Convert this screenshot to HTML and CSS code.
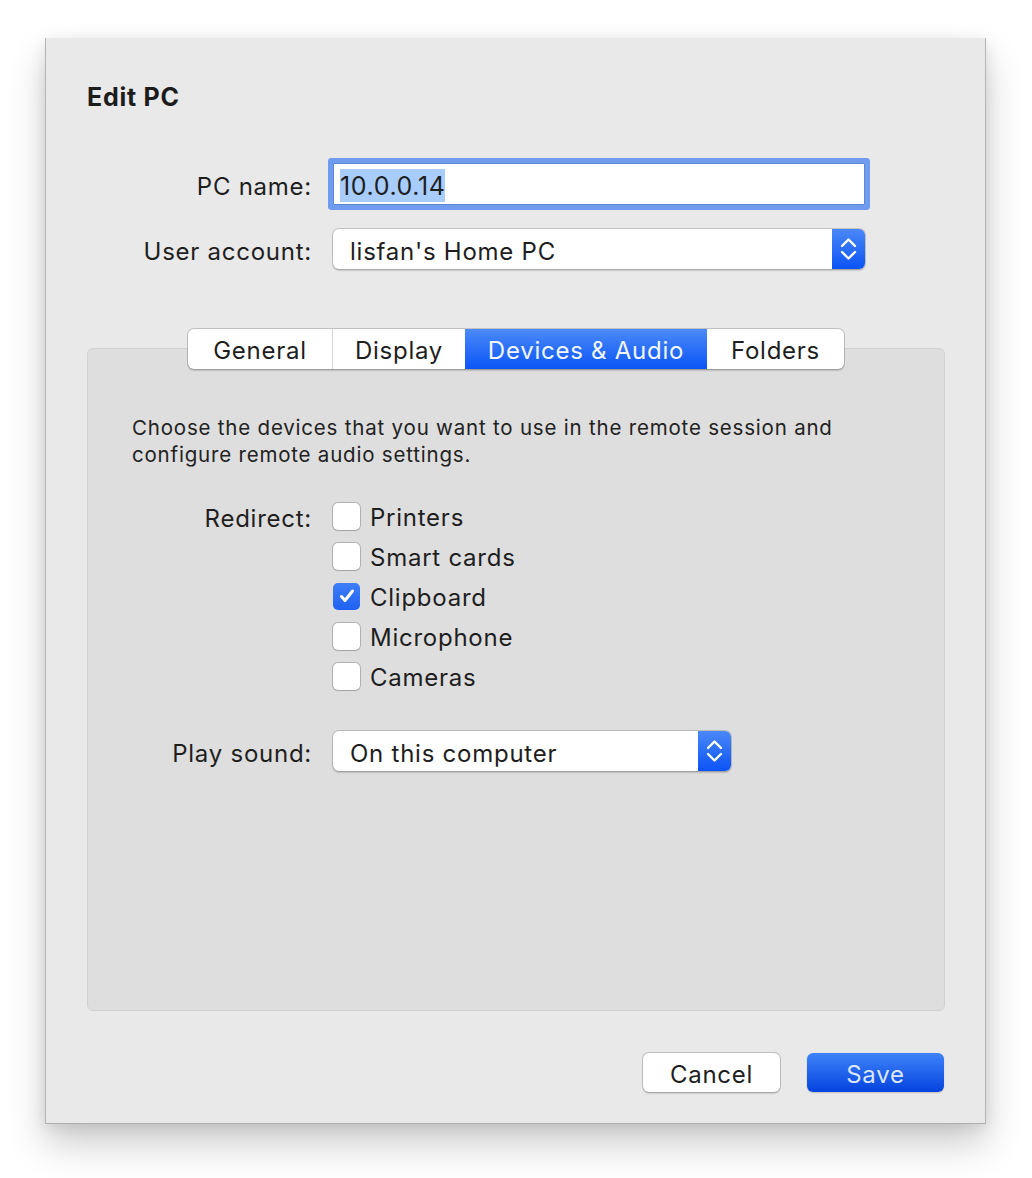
FILE: index.html
```html
<!DOCTYPE html>
<html lang="en">
<head>
<meta charset="utf-8">
<title>Edit PC</title>
<link rel="stylesheet" href="styles.css">
</head>
<body>
<div class="window">
  <h1 class="title">Edit PC</h1>

  <div class="form">
    <label class="label">PC name:</label>
    <div class="textfield"><span class="sel">10.0.0.14</span></div>

    <label class="label label-account">User account:</label>
    <div class="popup popup-wide">
      <span class="popup-text">lisfan's Home PC</span>
      <span class="popup-arrows">
        <svg width="33" height="38" viewBox="0 0 33 38"><path d="M10 16 L16.5 9.5 L23 16" /><path d="M10 22 L16.5 28.5 L23 22" /></svg>
      </span>
    </div>
  </div>

  <div class="tabs-wrap">
    <div class="tabs">
      <div class="tab tab-general">General</div>
      <div class="tab tab-display">Display</div>
      <div class="tab tab-devices active">Devices &amp; Audio</div>
      <div class="tab tab-folders">Folders</div>
    </div>
  </div>

  <div class="panel">
    <p class="desc">Choose the devices that you want to use in the remote session and configure remote audio settings.</p>

    <div class="pform">
      <div class="label plabel">Redirect:</div>
      <div class="checks">
        <div class="check"><span class="box"></span><span class="ctext">Printers</span></div>
        <div class="check"><span class="box"></span><span class="ctext">Smart cards</span></div>
        <div class="check"><span class="box on"><svg width="26" height="26" viewBox="0 0 26 26"><path d="M7.5 13.5 L11 17.5 L18.5 8" /></svg></span><span class="ctext">Clipboard</span></div>
        <div class="check"><span class="box"></span><span class="ctext">Microphone</span></div>
        <div class="check"><span class="box"></span><span class="ctext">Cameras</span></div>
      </div>

      <div class="label plabel sound-label">Play sound:</div>
      <div class="popup popup-sound">
        <span class="popup-text">On this computer</span>
        <span class="popup-arrows">
          <svg width="33" height="38" viewBox="0 0 33 38"><path d="M10 16 L16.5 9.5 L23 16" /><path d="M10 22 L16.5 28.5 L23 22" /></svg>
        </span>
      </div>
    </div>
  </div>

  <div class="buttons">
    <div class="btn btn-cancel">Cancel</div>
    <div class="btn btn-save">Save</div>
  </div>
</div>
</body>
</html>
```

FILE: styles.css
```css
* { box-sizing: border-box; }

html, body {
  margin: 0;
  padding: 0;
  background: #ffffff;
}

body {
  font-family: "Inter", "Liberation Sans", sans-serif;
  color: #1e1e1e;
  font-size: 24px;
  letter-spacing: 0.75px;
  padding-top: 38px;
  padding-bottom: 54px;
}

.window {
  margin: 0 0 0 45px;
  width: 941px;
  background: #e9e9e9;
  border-left: 1px solid #b4b4b4;
  border-right: 1px solid #b4b4b4;
  border-bottom: 1px solid #adadad;
  padding: 44px 40px 31px 41px;
  box-shadow: 0 20px 36px rgba(0, 0, 0, 0.2), 0 4px 14px rgba(0, 0, 0, 0.09);
}

.title {
  margin: 0;
  font-size: 25px;
  line-height: 30px;
  font-weight: 700;
  color: #1c1c1c;
}

.form {
  margin-top: 51px;
  display: grid;
  grid-template-columns: 224px 532px;
  column-gap: 22px;
  row-gap: 24px;
  align-items: center;
}

.label {
  text-align: right;
  font-size: 24px;
  line-height: 30px;
  padding-top: 6px;
  margin-right: -1px;
}

.textfield {
  height: 42px;
  background: #fff;
  border: 1px solid #5d86d6;
  box-shadow: 0 0 0 5px #6f9cef;
  border-radius: 1px;
  padding: 6px 6px 4px 6px;
  font-size: 25px;
  line-height: 30px;
}

.sel {
  display: inline-block;
  background: #a8cdfd;
  line-height: 32px;
  padding-top: 1px;
  margin-top: -1px;
  letter-spacing: 0.6px;
}

.popup {
  height: 40px;
  background: #fff;
  border-radius: 6px;
  box-shadow: 0 0 0 1px rgba(0, 0, 0, 0.16), 0 1.5px 1.5px rgba(0, 0, 0, 0.14);
  display: flex;
  align-items: center;
  overflow: hidden;
}

.popup-text {
  flex: 1;
  padding-left: 17px;
  padding-top: 5px;
  line-height: 30px;
}

.popup-arrows {
  width: 33px;
  height: 40px;
  display: flex;
  align-items: center;
  justify-content: center;
  background: linear-gradient(#4a88f8, #0b53f6);
}

.popup-arrows svg path {
  fill: none;
  stroke: #fff;
  stroke-width: 2.4;
  stroke-linecap: round;
  stroke-linejoin: round;
}

.tabs-wrap {
  margin-top: 60px;
  margin-bottom: -21px;
  display: flex;
  justify-content: center;
  position: relative;
  z-index: 1;
  width: 858px;
}

.tabs {
  display: flex;
  height: 40px;
  background: #fff;
  border-radius: 6px;
  box-shadow: 0 0 0 1px rgba(0, 0, 0, 0.17), 0 1.5px 1.5px rgba(0, 0, 0, 0.14);
  overflow: hidden;
}

.tab {
  display: flex;
  align-items: center;
  justify-content: center;
  font-size: 24px;
  padding-top: 2px;
  border-left: 1px solid #d4d4d4;
}

.tab:first-child { border-left: none; }

.tab-general { width: 144px; }
.tab-display { width: 133px; }
.tab-devices { width: 242px; }
.tab-folders { width: 137px; }

.tab.active {
  background: linear-gradient(#4b8af9, #0a55f6);
  color: #f2f6ff;
  border-left: none;
}

.tab.active + .tab { border-left: none; }

.panel {
  width: 858px;
  height: 663px;
  background: #dedede;
  border: 1px solid #d2d2d2;
  border-radius: 6px;
  padding: 65px 44px 0 44px;
}

.desc {
  margin: 0;
  font-size: 20.5px;
  line-height: 27px;
  letter-spacing: 0.8px;
  width: 760px;
  color: #222;
}

.pform {
  margin-top: 28px;
  display: grid;
  grid-template-columns: 179px 398px;
  column-gap: 22px;
  align-items: start;
}

.plabel {
  line-height: 40px;
  padding-top: 3px;
}

.checks {
  display: flex;
  flex-direction: column;
}

.check {
  display: flex;
  align-items: center;
  height: 40px;
  gap: 10px;
  line-height: 30px;
}

.ctext {
  padding-top: 4px;
}

.box {
  width: 27px;
  height: 27px;
  border-radius: 5px;
  background: #fff;
  box-shadow: 0 0 0 1px rgba(0, 0, 0, 0.2), 0 1px 1px rgba(0, 0, 0, 0.08);
  display: flex;
  align-items: center;
  justify-content: center;
}

.box.on {
  background: linear-gradient(#3e7ef8, #1f62f3);
  box-shadow: none;
}

.box svg path {
  fill: none;
  stroke: #fff;
  stroke-width: 3;
  stroke-linecap: round;
  stroke-linejoin: round;
}

.sound-label {
  margin-top: 35px;
}

.popup-sound {
  margin-top: 35px;
}

.buttons {
  margin-top: 42px;
  display: flex;
  justify-content: flex-end;
  gap: 27px;
  width: 858px;
}

.btn {
  width: 137px;
  height: 39px;
  border-radius: 6px;
  display: flex;
  align-items: center;
  justify-content: center;
  font-size: 24px;
  padding-top: 4px;
}

.btn-cancel {
  background: #fff;
  box-shadow: 0 0 0 1px rgba(0, 0, 0, 0.18), 0 1.5px 1.5px rgba(0, 0, 0, 0.12);
}

.btn-save {
  margin-right: 1px;
  background: linear-gradient(#3f83fa, #0543de);
  color: #dbe6fd;
  box-shadow: 0 1px 1.5px rgba(0, 0, 0, 0.18);
}
```
